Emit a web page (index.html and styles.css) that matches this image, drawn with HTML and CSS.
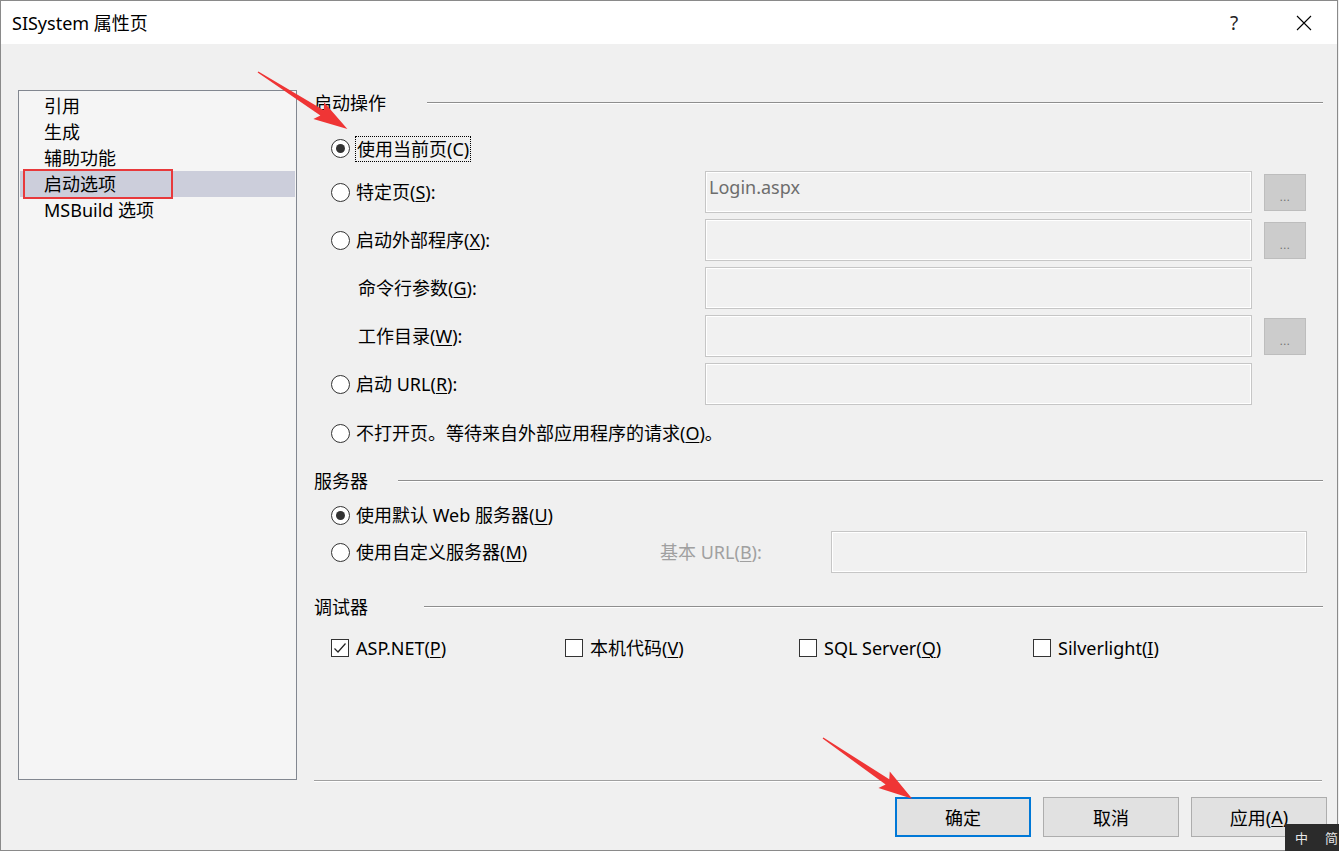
FILE: index.html
```html
<!DOCTYPE html>
<html lang="zh-CN">
<head>
<meta charset="utf-8">
<title>SISystem 属性页</title>
<link rel="stylesheet" href="styles.css">
</head>
<body>
<div class="window">
  <div class="titlebar">
    <span class="title">SISystem 属性页</span>
    <span class="tb-btn help">?</span>
    <span class="tb-btn close"><svg width="16" height="16" viewBox="0 0 16 16"><path d="M1 1 L15 15 M15 1 L1 15" stroke="#000" stroke-width="1.1" fill="none"/></svg></span>
  </div>
  <div class="content">
    <div class="nav">
      <div class="nav-item">引用</div>
      <div class="nav-item">生成</div>
      <div class="nav-item">辅助功能</div>
      <div class="nav-item sel">启动选项</div>
      <div class="nav-item">MSBuild 选项</div>
    </div>
    <div class="main">
      <div class="head"><span>启动操作</span><i class="rule r1"></i></div>

      <div class="row first">
        <div class="lab"><span class="radio on"></span><span class="focus">使用当前页(C)</span></div>
      </div>
      <div class="row r2">
        <div class="lab"><span class="radio"></span><span>特定页(<u>S</u>):</span></div>
        <div class="tbox"><span class="val">Login.aspx</span></div>
        <div class="browse">...</div>
      </div>
      <div class="row">
        <div class="lab"><span class="radio"></span><span>启动外部程序(<u>X</u>):</span></div>
        <div class="tbox"></div>
        <div class="browse">...</div>
      </div>
      <div class="row">
        <div class="lab indent"><span>命令行参数(<u>G</u>):</span></div>
        <div class="tbox"></div>
      </div>
      <div class="row">
        <div class="lab indent"><span>工作目录(<u>W</u>):</span></div>
        <div class="tbox"></div>
        <div class="browse">...</div>
      </div>
      <div class="row">
        <div class="lab"><span class="radio"></span><span>启动 URL(<u>R</u>):</span></div>
        <div class="tbox"></div>
      </div>
      <div class="row r7">
        <div class="lab wide"><span class="radio"></span><span>不打开页。等待来自外部应用程序的请求(<u>O</u>)。</span></div>
      </div>

      <div class="head h2"><span>服务器</span><i class="rule r2"></i></div>
      <div class="row srv1">
        <div class="lab wide"><span class="radio on"></span><span>使用默认 Web 服务器(<u>U</u>)</span></div>
      </div>
      <div class="row srv2">
        <div class="lab srvlab"><span class="radio"></span><span>使用自定义服务器(<u>M</u>)</span></div>
        <span class="baseurl">基本 URL(<u>B</u>):</span>
        <div class="tbox url"></div>
      </div>

      <div class="head h3"><span>调试器</span><i class="rule r3"></i></div>
      <div class="checks">
        <div class="chk"><span class="cbox"><svg width="16" height="16" viewBox="0 0 16 16"><path d="M2.5 8.5 L6 12 L13.5 3.5" stroke="#222" stroke-width="1.2" fill="none"/></svg></span><span>ASP.NET(<u>P</u>)</span></div>
        <div class="chk"><span class="cbox"></span><span>本机代码(<u>V</u>)</span></div>
        <div class="chk"><span class="cbox"></span><span>SQL Server(<u>Q</u>)</span></div>
        <div class="chk"><span class="cbox"></span><span>Silverlight(<u>I</u>)</span></div>
      </div>

      <div class="sep"></div>
      <div class="btns">
        <div class="btn default">确定</div>
        <div class="btn">取消</div>
        <div class="btn">应用(<u>A</u>)</div>
      </div>
    </div>
  </div>
</div>

<svg class="annot" width="1339" height="851" viewBox="0 0 1339 851">
  <g transform="translate(258 72) rotate(32.5)">
    <polygon points="0,-0.7 76,-3.2 72,-10 106,0 72,10 76,3.2 0,0.7" fill="#ef3535"/>
  </g>
  <g transform="translate(823 738) rotate(34.3)">
    <polygon points="0,-0.7 78,-3.2 74,-10 108,0 74,10 78,3.2 0,0.7" fill="#ef3535"/>
  </g>
</svg>

<div class="ime"><span>中</span><span>简</span></div>
</body>
</html>
```

FILE: styles.css
```css
html, body {
  margin: 0;
  padding: 0;
}

body {
  position: relative;
  width: 1339px;
  height: 851px;
  overflow: hidden;
  background: #f0f0f0;
  font-family: "Noto Sans", "Noto Sans CJK SC", sans-serif;
  font-size: 18px;
  color: #000;
}

u {
  text-decoration: underline;
  text-underline-offset: 2px;
  text-decoration-thickness: 1px;
}

.window {
  width: 1338px;
  height: 851px;
  box-sizing: border-box;
  border: 1px solid #8a8a8a;
  background: #f0f0f0;
  display: flex;
  flex-direction: column;
}

/* title bar */
.titlebar {
  height: 43px;
  flex-shrink: 0;
  background: #fff;
  display: flex;
  align-items: center;
  padding-left: 11px;
}

.title {
  flex: 1;
  font-size: 18px;
  line-height: 24px;
}

.tb-btn {
  width: 46px;
  height: 43px;
  display: flex;
  align-items: center;
  justify-content: center;
}

.help {
  margin-right: 24px;
  font-size: 19px;
  color: #222;
}

.close {
  margin-right: 10px;
}

/* content */
.content {
  flex: 1;
  display: flex;
  padding: 46px 0 0 17px;
  min-height: 0;
}

.nav {
  width: 279px;
  height: 690px;
  box-sizing: border-box;
  border: 1px solid #828790;
  background: #f5f5f5;
  padding: 2px 1px 0;
  flex-shrink: 0;
}

.nav-item {
  height: 26px;
  line-height: 26px;
  padding-left: 24px;
  font-size: 18px;
}

.nav-item.sel {
  position: relative;
  background: #cccedb;
}

.nav-item.sel::after {
  content: "";
  position: absolute;
  left: 3px;
  top: -2px;
  width: 150px;
  height: 30px;
  box-sizing: border-box;
  border: 2px solid #e8393b;
}

.main {
  margin-left: 17px;
  width: 1013px;
  display: flex;
  flex-direction: column;
}

.head {
  height: 26px;
  display: flex;
  align-items: center;
  margin-right: 4px;
  line-height: 26px;
}

.rule {
  flex: 1;
  height: 0;
  border-top: 1px solid #8e8e8e;
  border-bottom: 1px solid #ffffff;
}

.rule.r1 { margin-left: 41px; }
.rule.r2 { margin-left: 30px; }
.rule.r3 { margin-left: 56px; }

.h2 { margin-top: 7px; }
.h3 { margin-top: 21px; }

.row {
  display: flex;
  align-items: center;
  height: 42px;
  margin-top: 6px;
  line-height: 26px;
}

.row.first {
  height: 45px;
  margin-top: 10px;
}

.row.r2 { margin-top: 0; }

.row.r7 {
  height: 56px;
  margin-top: 0;
}

.row.srv1 {
  height: 26px;
  margin-top: 8px;
}

.row.srv2 {
  height: 42px;
  margin-top: 3px;
}

.lab {
  width: 391px;
  flex-shrink: 0;
  display: flex;
  align-items: center;
  white-space: nowrap;
}

.lab.wide { width: auto; }
.lab.srvlab { width: 346px; }

.lab.indent { padding-left: 44px; box-sizing: border-box; }

.radio {
  width: 19px;
  height: 19px;
  box-sizing: border-box;
  border: 1px solid #333;
  border-radius: 50%;
  background: #fff;
  margin-left: 17px;
  margin-right: 6px;
  flex-shrink: 0;
  position: relative;
}

.radio.on::after {
  content: "";
  position: absolute;
  left: 4px;
  top: 4px;
  width: 9px;
  height: 9px;
  border-radius: 50%;
  background: #333;
}

.focus {
  margin-left: -1px;
  border: 1px dotted #000;
  padding: 0 1px 0 1px;
  height: 24px;
  line-height: 24px;
}

.tbox {
  width: 547px;
  height: 42px;
  box-sizing: border-box;
  border: 1px solid #c6c6c6;
  box-shadow: inset 0 0 0 1px #ffffff;
  background: #f1f1f1;
  flex-shrink: 0;
  padding: 2px 0 0 3px;
}

.tbox.url { width: 476px; }

.val {
  color: #6d6d6d;
  line-height: 26px;
}

.browse {
  width: 42px;
  height: 37px;
  box-sizing: border-box;
  margin-left: 12px;
  border: 1px solid #bdbdbd;
  background: #cccccc;
  color: #6f6f6f;
  font-size: 11px;
  display: flex;
  justify-content: center;
  align-items: center;
  padding-top: 10px;
  letter-spacing: 0.5px;
}

.baseurl {
  width: 171px;
  flex-shrink: 0;
  color: #a0a0a0;
  white-space: nowrap;
}

.checks {
  display: flex;
  align-items: center;
  height: 26px;
  margin-top: 15px;
  padding-left: 17px;
  line-height: 26px;
}

.chk {
  width: 234px;
  display: flex;
  align-items: center;
  white-space: nowrap;
}

.cbox {
  width: 18px;
  height: 18px;
  box-sizing: border-box;
  border: 1px solid #333;
  background: #fff;
  margin-right: 7px;
  flex-shrink: 0;
  display: flex;
}

.sep {
  margin-top: auto;
  margin-right: 5px;
  border-top: 1px solid #a0a0a0;
  border-bottom: 1px solid #ffffff;
}

.btns {
  display: flex;
  justify-content: flex-end;
  gap: 12px;
  margin-top: 15px;
  margin-bottom: 13px;
}

.btn {
  width: 136px;
  height: 40px;
  box-sizing: border-box;
  border: 1px solid #adadad;
  background: #e1e1e1;
  display: flex;
  align-items: center;
  justify-content: center;
  font-size: 18px;
}

.btn.default {
  border: 2px solid #0078d7;
}

/* overlays */
.annot {
  position: absolute;
  left: 0;
  top: 0;
  pointer-events: none;
}

.ime {
  position: absolute;
  right: 0;
  bottom: 0;
  width: 54px;
  height: 27px;
  background: #2b2b2b;
  color: #e8e8e8;
  font-size: 13px;
  display: flex;
  align-items: center;
  gap: 17px;
  padding-left: 10px;
  box-sizing: border-box;
  white-space: nowrap;
  overflow: hidden;
}
```
